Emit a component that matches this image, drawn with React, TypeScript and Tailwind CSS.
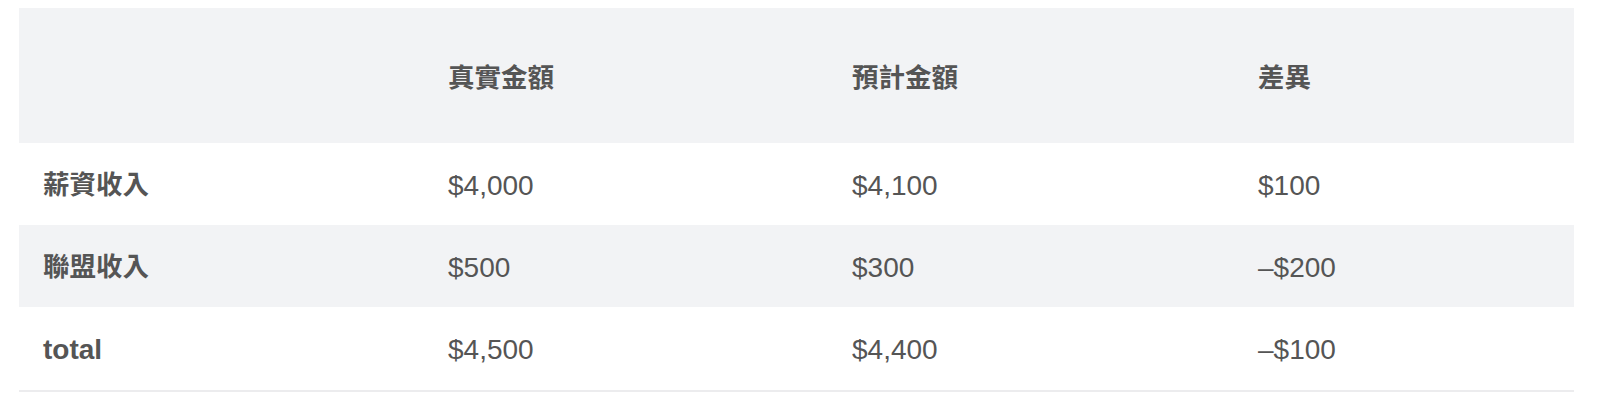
import React from "react";

const rows = [
  { label: "薪資收入", a: "$4,000", b: "$4,100", c: "$100", shade: false, cjk: true },
  { label: "聯盟收入", a: "$500", b: "$300", c: "–$200", shade: true, cjk: true },
  { label: "total", a: "$4,500", b: "$4,400", c: "–$100", shade: false, cjk: false },
];

export default function App() {
  return (
    <div
      className="w-[1600px] h-[412px] bg-white pt-[8px] pl-[19px]"
      style={{ fontFamily: '"Liberation Sans", "Noto Sans CJK TC", sans-serif' }}
    >
      <table className="w-[1555px] border-collapse text-[28px] text-[#555555]">
        <colgroup>
          <col className="w-[405px]" />
          <col className="w-[404px]" />
          <col className="w-[406px]" />
          <col className="w-[340px]" />
        </colgroup>
        <thead>
          <tr className="h-[135px] bg-[#f2f3f5]">
            <th className="px-6 text-left font-semibold"></th>
            <th className="px-6 pt-[6px] text-left text-[26.5px] font-semibold">真實金額</th>
            <th className="px-6 pt-[6px] text-left text-[26.5px] font-semibold">預計金額</th>
            <th className="px-6 pt-[6px] text-left text-[26.5px] font-semibold">差異</th>
          </tr>
        </thead>
        <tbody>
          {rows.map((r, i) => (
            <tr
              key={i}
              className={
                (r.shade ? "bg-[#f2f3f5] " : "bg-white ") +
                (i === 2 ? "h-[84px] border-b-2 border-[#ececee]" : "h-[82px]")
              }
            >
              <td className={"px-6 pt-[3px] font-semibold " + (r.cjk ? "text-[26.5px]" : "text-[28px]")}>
                {r.label}
              </td>
              <td className="px-6 pt-[3px]">{r.a}</td>
              <td className="px-6 pt-[3px]">{r.b}</td>
              <td className="px-6 pt-[3px]">{r.c}</td>
            </tr>
          ))}
        </tbody>
      </table>
    </div>
  );
}
